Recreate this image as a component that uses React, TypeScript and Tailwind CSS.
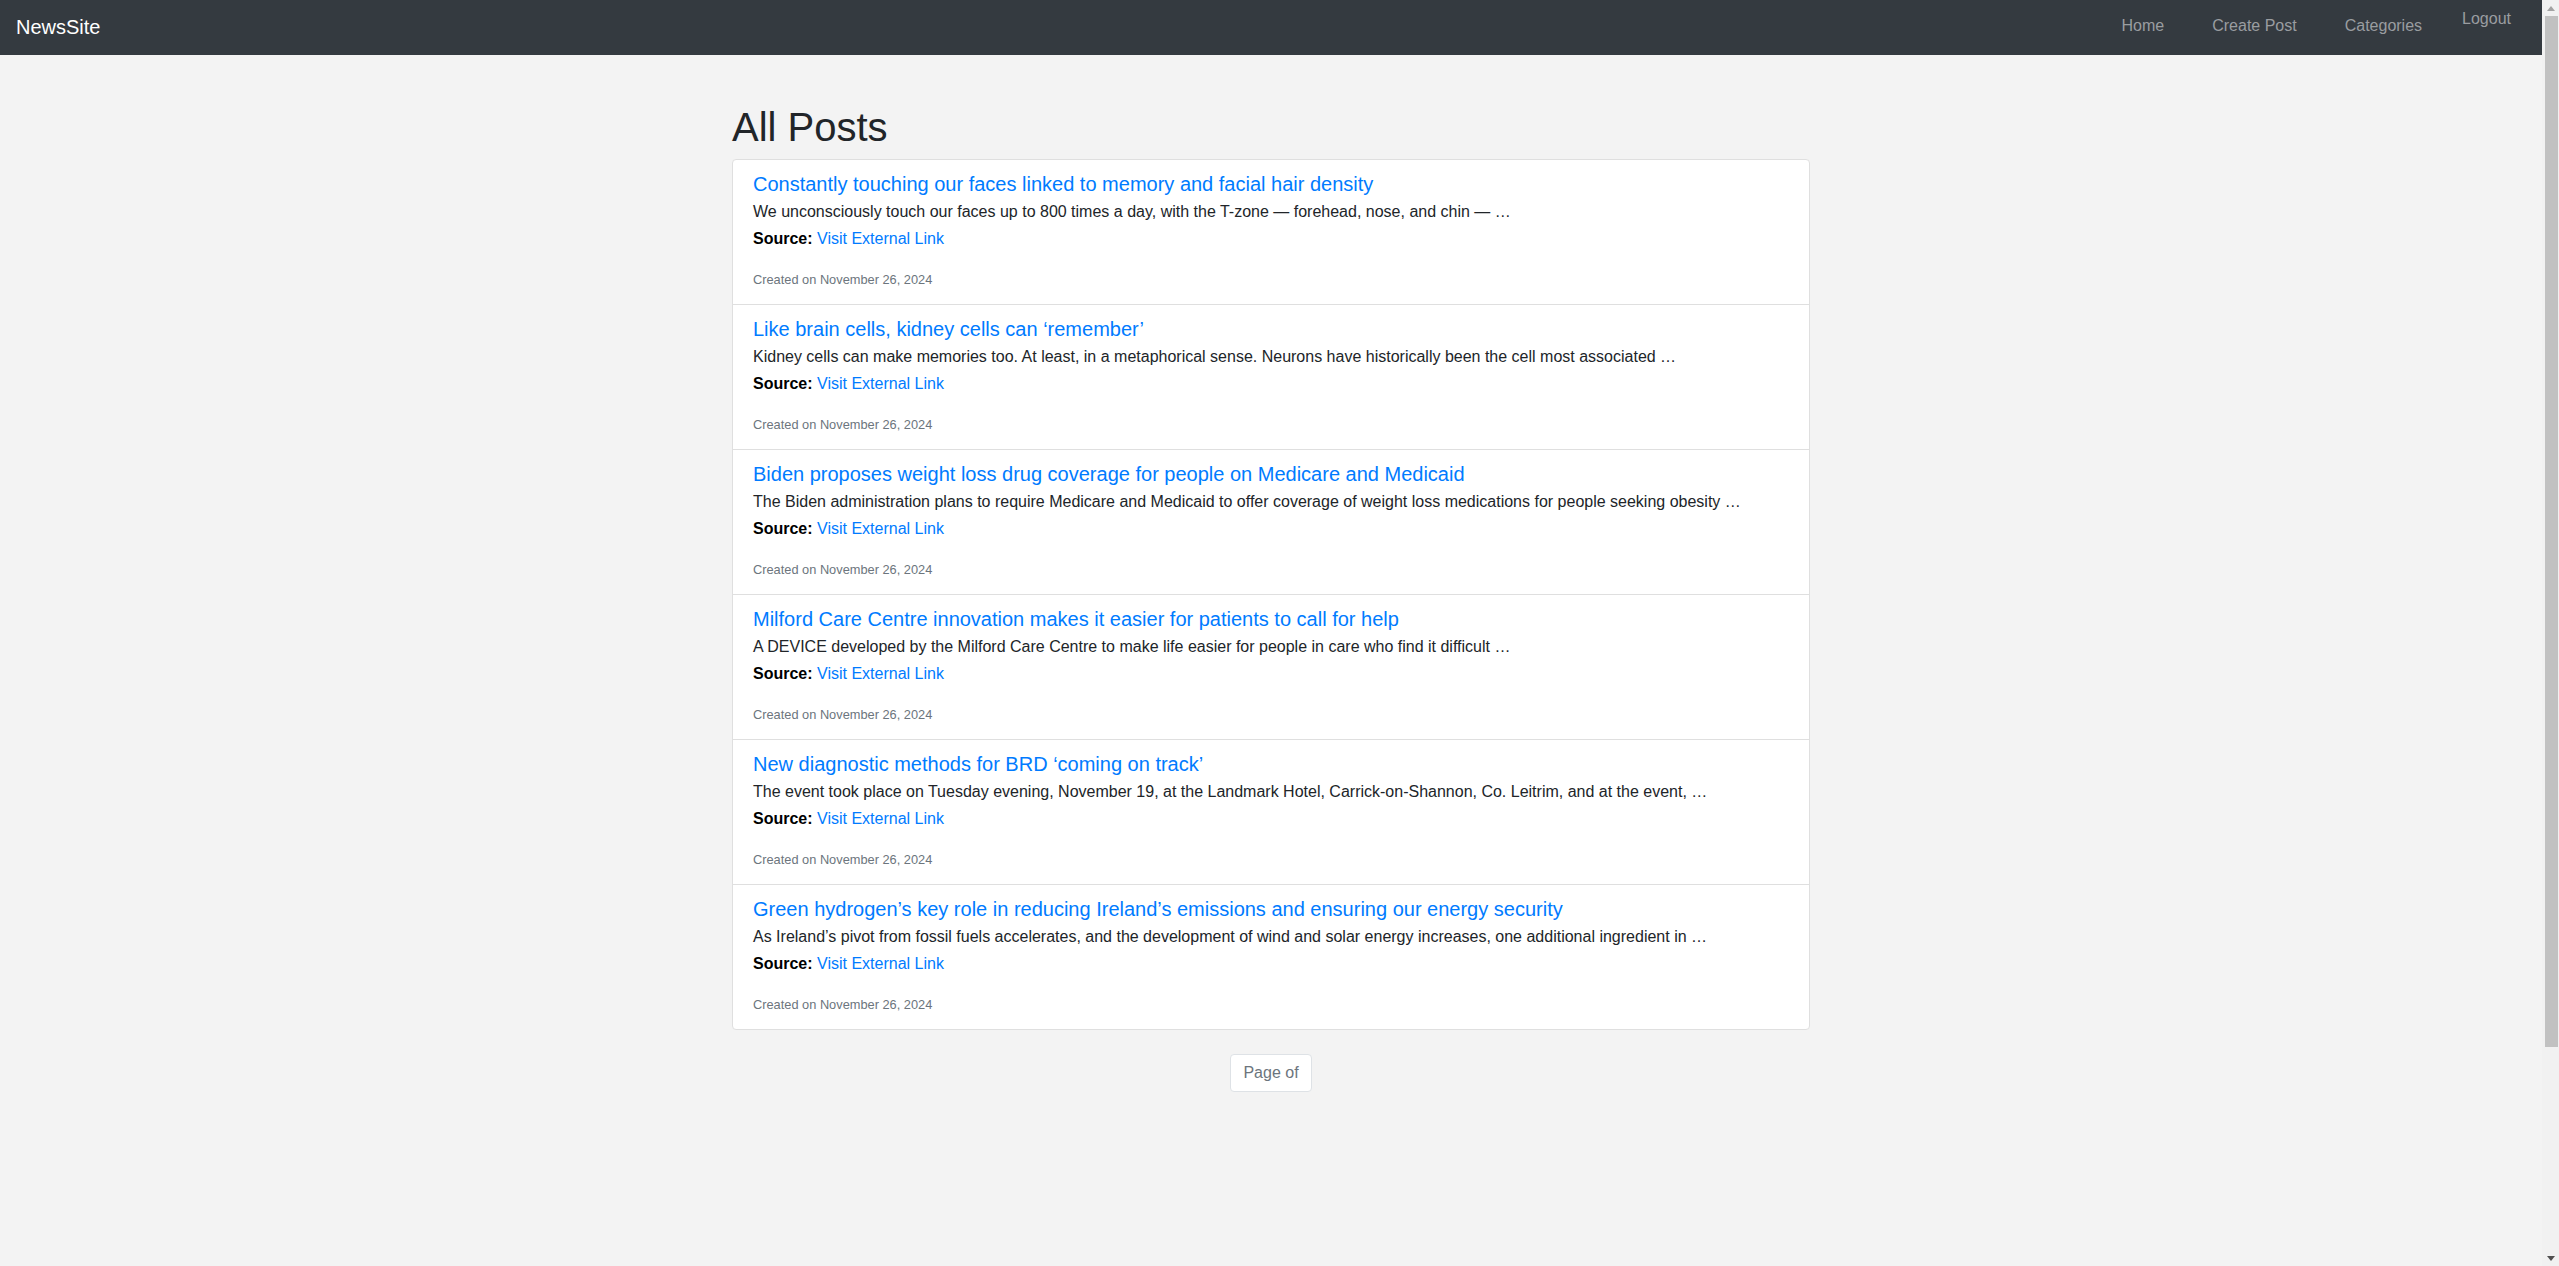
import React from "react";

type Post = {
  title: string;
  summary: string;
  created: string;
};

const posts: Post[] = [
  {
    title: "Constantly touching our faces linked to memory and facial hair density",
    summary:
      "We unconsciously touch our faces up to 800 times a day, with the T-zone — forehead, nose, and chin — …",
    created: "November 26, 2024",
  },
  {
    title: "Like brain cells, kidney cells can ‘remember’",
    summary:
      "Kidney cells can make memories too. At least, in a metaphorical sense. Neurons have historically been the cell most associated …",
    created: "November 26, 2024",
  },
  {
    title: "Biden proposes weight loss drug coverage for people on Medicare and Medicaid",
    summary:
      "The Biden administration plans to require Medicare and Medicaid to offer coverage of weight loss medications for people seeking obesity …",
    created: "November 26, 2024",
  },
  {
    title: "Milford Care Centre innovation makes it easier for patients to call for help",
    summary:
      "A DEVICE developed by the Milford Care Centre to make life easier for people in care who find it difficult …",
    created: "November 26, 2024",
  },
  {
    title: "New diagnostic methods for BRD ‘coming on track’",
    summary:
      "The event took place on Tuesday evening, November 19, at the Landmark Hotel, Carrick-on-Shannon, Co. Leitrim, and at the event, …",
    created: "November 26, 2024",
  },
  {
    title: "Green hydrogen’s key role in reducing Ireland’s emissions and ensuring our energy security",
    summary:
      "As Ireland’s pivot from fossil fuels accelerates, and the development of wind and solar energy increases, one additional ingredient in …",
    created: "November 26, 2024",
  },
];

function Navbar() {
  return (
    <nav className="h-[55px] bg-[#343a40] flex items-start justify-between pl-4 pr-[31px]">
      <a href="#" className="mt-[12px] text-[20px] leading-[30px] text-white">
        NewsSite
      </a>
      <ul className="flex items-start text-[16px] text-[#9a9da0]">
        <li className="mt-[14px] leading-6">
          <a href="#">Home</a>
        </li>
        <li className="mt-[14px] ml-[48px] leading-6">
          <a href="#">Create Post</a>
        </li>
        <li className="mt-[14px] ml-[48px] leading-6">
          <a href="#">Categories</a>
        </li>
        <li className="mt-[7px] ml-[40px] leading-6">
          <button className="text-[#9a9da0]">Logout</button>
        </li>
      </ul>
    </nav>
  );
}

function PostItem({ post, first }: { post: Post; first: boolean }) {
  return (
    <div className={first ? "px-5 pt-3 pb-[15px]" : "border-t border-[#dfdfdf] px-5 pt-3 pb-[15px]"}>
      <h5 className="text-[20px] leading-6 mb-[4px]">
        <a href="#" className="text-[#007bff]">
          {post.title}
        </a>
      </h5>
      <p className="text-[16px] leading-6 mb-[3px] text-[#212529]">{post.summary}</p>
      <p className="text-[16px] leading-6 mb-[19px]">
        <strong className="font-bold text-black">Source:</strong>{" "}
        <a href="#" className="text-[#007bff]">
          Visit External Link
        </a>
      </p>
      <small className="block text-[12.8px] leading-[19px] text-[#6c757d]">
        Created on {post.created}
      </small>
    </div>
  );
}

// window scrollbar as it appears in the screenshot
function Scrollbar() {
  return (
    <aside className="w-[17px] shrink-0 bg-[#f1f1f1] flex flex-col items-center">
      <div className="h-[16px] flex items-center justify-center">
        <svg width="8" height="5" viewBox="0 0 8 5">
          <polygon points="0,5 4,0 8,5" fill="#a3a3a3" />
        </svg>
      </div>
      <div className="w-[13px] ml-[2px] h-[1031px] bg-[#c1c1c1]" />
      <div className="flex-1" />
      <div className="h-[16px] flex items-center justify-center">
        <svg width="8" height="5" viewBox="0 0 8 5">
          <polygon points="0,0 8,0 4,5" fill="#505050" />
        </svg>
      </div>
    </aside>
  );
}

export default function App() {
  return (
    <div className="h-[1266px] overflow-hidden flex bg-[#f3f3f3] font-['Liberation_Sans',Arial,sans-serif] text-[#212529]">
      <div className="flex-1 min-w-0">
        <Navbar />
        <main className="w-[1078px] mx-auto pt-[48px]">
          <h1 className="text-[40px] leading-[48px] mb-2 font-normal">All Posts</h1>
          <div className="bg-white border border-[#dfdfdf] rounded">
            {posts.map((post, i) => (
              <PostItem key={i} post={post} first={i === 0} />
            ))}
          </div>
          <div className="flex justify-center mt-6">
            <span className="bg-white border border-[#dee2e6] rounded px-3 py-2 leading-5 text-[16px] text-[#6c757d]">
              Page of
            </span>
          </div>
        </main>
      </div>
      <Scrollbar />
    </div>
  );
}
